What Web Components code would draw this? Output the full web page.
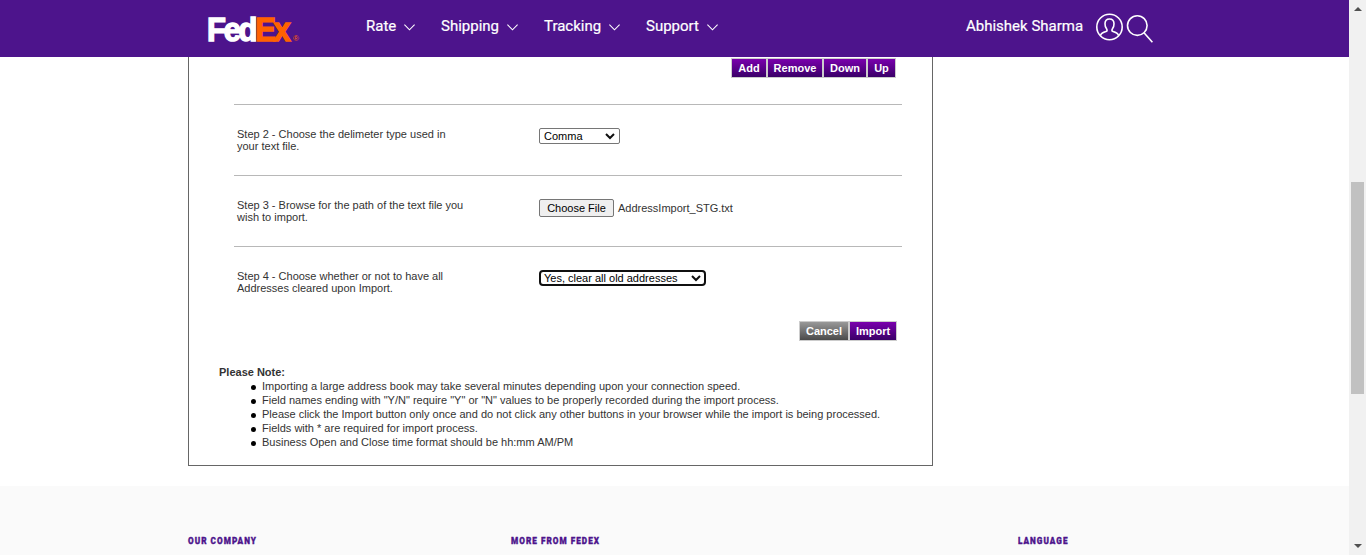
<!DOCTYPE html>
<html lang="en">
<head>
<meta charset="utf-8">
<title>Import Address Book</title>
<style>
html,body{margin:0;height:555px;overflow:hidden;background:#fff}
body{font-family:"Liberation Sans",Arial,sans-serif;font-size:11px;color:#333}
</style>
</head>
<body>
<address-page></address-page>
<script>
const define = (name, html) => customElements.define(name, class extends HTMLElement {
  constructor() {
    super();
    const t = document.createElement('template');
    t.innerHTML = html;
    this.attachShadow({mode: 'open'}).append(t.content.cloneNode(true));
  }
});

define('nav-item', `<style>
:host{display:flex;align-items:center;justify-content:space-between;box-sizing:border-box;height:20px;white-space:nowrap}
svg{display:block;margin-top:2px}
</style><span><slot></slot></span>
<svg width="11" height="7" viewBox="0 0 11 7" fill="none" stroke="#fff" stroke-width="1.1"><path d="M.4 .7 5.5 5.8 10.6 .7"/></svg>`);

define('brand-logo', `<style>:host{display:block;width:94px;height:50px}svg{display:block;overflow:visible}
text{font-family:"Liberation Sans",sans-serif;font-weight:700;font-size:34px;letter-spacing:-2.5px}</style>
<svg width="94" height="50" viewBox="0 0 94 50">
<text x="-1" y="39.5" stroke-width="1.5" textLength="81.5" lengthAdjust="spacingAndGlyphs"><tspan fill="#fff" stroke="#fff">Fed</tspan><tspan fill="#ff6200" stroke="#ff6200">Ex</tspan></text>
<text x="85" y="39.5" fill="#ff6200" style="font-size:8px;font-weight:400;letter-spacing:0">®</text></svg>`);

define('site-header', `<style>
:host{display:flex;box-sizing:border-box;height:57px;background:#4d148c;color:#fff;padding-left:208px;font:15px/20px Roboto,sans-serif;-webkit-text-stroke:.2px #fff}
brand-logo{margin-top:1px;-webkit-text-stroke:0}
nav{display:flex;gap:26px;margin:16px 0 0 64px}
.user{margin:16px 0 0 248px;width:117px;white-space:nowrap}
.ic{display:block;flex:none}
</style>
<brand-logo></brand-logo>
<nav><nav-item style="width:49px">Rate</nav-item><nav-item style="width:77px">Shipping</nav-item><nav-item style="width:76px">Tracking</nav-item><nav-item style="width:72px">Support</nav-item></nav>
<span class="user">Abhishek Sharma</span>
<svg class="ic" style="margin:13px 0 0 12px" width="29" height="29" viewBox="0 0 29 29" fill="none" stroke="#fff" stroke-width="1.6"><circle cx="14.5" cy="14" r="12.7"/><path d="M5.5 22.5C6.2 20 8 19.4 11 18.6 12.4 18.2 12.3 16.8 11.4 15.6 10.3 14.2 10 12.6 10 10.8 10 7.8 11.8 6 14.5 6S19 7.8 19 10.8C19 12.6 18.7 14.2 17.6 15.6 16.7 16.8 16.6 18.2 18 18.6 21 19.4 22.8 20 23.5 22.5"/></svg>
<svg class="ic" style="margin:13px 0 0 2px" width="28" height="31" viewBox="0 0 28 31" fill="none" stroke="#fff" stroke-width="1.6"><circle cx="11.3" cy="12.6" r="9.8"/><path d="M18 19.7 26.4 29.2"/></svg>`);

define('push-button', `<style>
:host{display:block;box-sizing:border-box;height:20px;border:1px solid #ccc;background:linear-gradient(#7a00ad,#3a0068);color:#fff;font-weight:bold;font-size:11px;line-height:18px;text-align:center;white-space:nowrap}
:host([gray]){background:linear-gradient(#999,#4a4a4a)}
</style><slot></slot>`);

define('drop-down', `<style>
:host{display:flex;align-items:center;justify-content:space-between;box-sizing:border-box;height:16px;border:1px solid #767676;border-radius:2px;padding:0 4px;color:#000;background:#fff;line-height:14px;white-space:nowrap}
:host([focused]){border:2px solid #101010;border-radius:4px;padding:0 3px;line-height:12px}
svg{display:block}
</style><span><slot></slot></span>
<svg width="10" height="7" viewBox="0 0 10 7" fill="none" stroke="#101010" stroke-width="2"><path d="M1 1 5 5 9 1"/></svg>`);

define('file-field', `<style>
:host{display:flex;gap:4px;align-items:center;height:18px;white-space:nowrap}
.b{box-sizing:border-box;width:75px;height:18px;border:1px solid #767676;border-radius:2px;background:#efefef;color:#000;text-align:center;line-height:17px}
</style><span class="b">Choose File</span><slot></slot>`);

define('import-step', `<style>
:host{display:grid;grid-template-columns:302px 1fr;box-sizing:border-box;width:668px;height:71px;margin-left:45px;border-top:1px solid #b8b8b8;padding:23px 0 0 3px;line-height:12px}
.c{display:flex;align-items:flex-start}
</style><div><slot name="label"></slot></div><div class="c"><slot></slot></div>`);

define('note-list', `<style>
:host{display:block;margin:24px 0 0 30px;line-height:14px;white-space:nowrap}
b{display:block}
ul{list-style:none;margin:0;padding:0 0 0 32px}
li{display:flex;gap:6px;align-items:center}
li::before{content:"";width:5px;height:5px;border-radius:50%;background:#000;margin-top:2px}
</style><b>Please Note:</b><ul>
<li><span>Importing a large address book may take several minutes depending upon your connection speed.</span></li>
<li><span>Field names ending with "Y/N" require "Y" or "N" values to be properly recorded during the import process.</span></li>
<li><span>Please click the Import button only once and do not click any other buttons in your browser while the import is being processed.</span></li>
<li><span>Fields with * are required for import process.</span></li>
<li><span>Business Open and Close time format should be hh:mm AM/PM</span></li></ul>`);

define('import-panel', `<style>
:host{display:block;box-sizing:border-box;width:745px;height:409px;margin-left:188px;border:1px solid #666;border-top:0}
.bar{display:flex;justify-content:flex-end}
.top{padding:1px 36px 26px 0}
.end{padding:4px 35px 0 0}
</style>
<div class="bar top"><push-button style="width:36px">Add</push-button><push-button style="width:56px">Remove</push-button><push-button style="width:44px">Down</push-button><push-button style="width:29px">Up</push-button></div>
<import-step><span slot="label">Step 2 - Choose the delimeter type used in<br>your text file.</span><drop-down style="width:81px">Comma</drop-down></import-step>
<import-step><span slot="label">Step 3 - Browse for the path of the text file you<br>wish to import.</span><file-field>AddressImport_STG.txt</file-field></import-step>
<import-step><span slot="label">Step 4 - Choose whether or not to have all<br>Addresses cleared upon Import.</span><drop-down focused style="width:167px">Yes, clear all old addresses</drop-down></import-step>
<div class="bar end"><push-button gray style="width:50px">Cancel</push-button><push-button style="width:48px">Import</push-button></div>
<note-list></note-list>`);

define('site-footer', `<style>
:host{display:grid;grid-template-columns:323px 507px 1fr;box-sizing:border-box;height:69px;margin-top:20px;background:#fafafa;padding:47px 0 0 188px}
svg{display:block;overflow:visible}
text{font:900 9.6px Roboto,sans-serif;fill:#4d148c;stroke:#4d148c;stroke-width:.35px;letter-spacing:1.2px}
</style>
<svg width="80" height="14"><text x="0" y="10.8" textLength="69" lengthAdjust="spacingAndGlyphs">OUR COMPANY</text></svg>
<svg width="100" height="14"><text x="0" y="10.8" textLength="89" lengthAdjust="spacingAndGlyphs">MORE FROM FEDEX</text></svg>
<svg width="60" height="14"><text x="0" y="10.8" textLength="50.5" lengthAdjust="spacingAndGlyphs">LANGUAGE</text></svg>`);

define('scroll-track', `<style>
:host{display:flex;flex-direction:column;justify-content:space-between;align-items:center;box-sizing:border-box;width:17px;height:555px;background:#f1f1f1;padding:7px 0 7px}
i{width:13px;height:212px;background:#c1c1c1;margin-bottom:-21px}
svg{display:block}
</style><svg width="8" height="4"><path d="M0 4 4 0 8 4Z" fill="#505050"/></svg><i></i><svg width="8" height="4"><path d="M0 0H8L4 4Z" fill="#505050"/></svg>`);

define('address-page', `<style>:host{display:grid;grid-template-columns:1349px 17px;height:555px}main{display:block;min-width:0}</style>
<main><site-header></site-header><import-panel></import-panel><site-footer></site-footer></main><scroll-track></scroll-track>`);
</script>
</body>
</html>
